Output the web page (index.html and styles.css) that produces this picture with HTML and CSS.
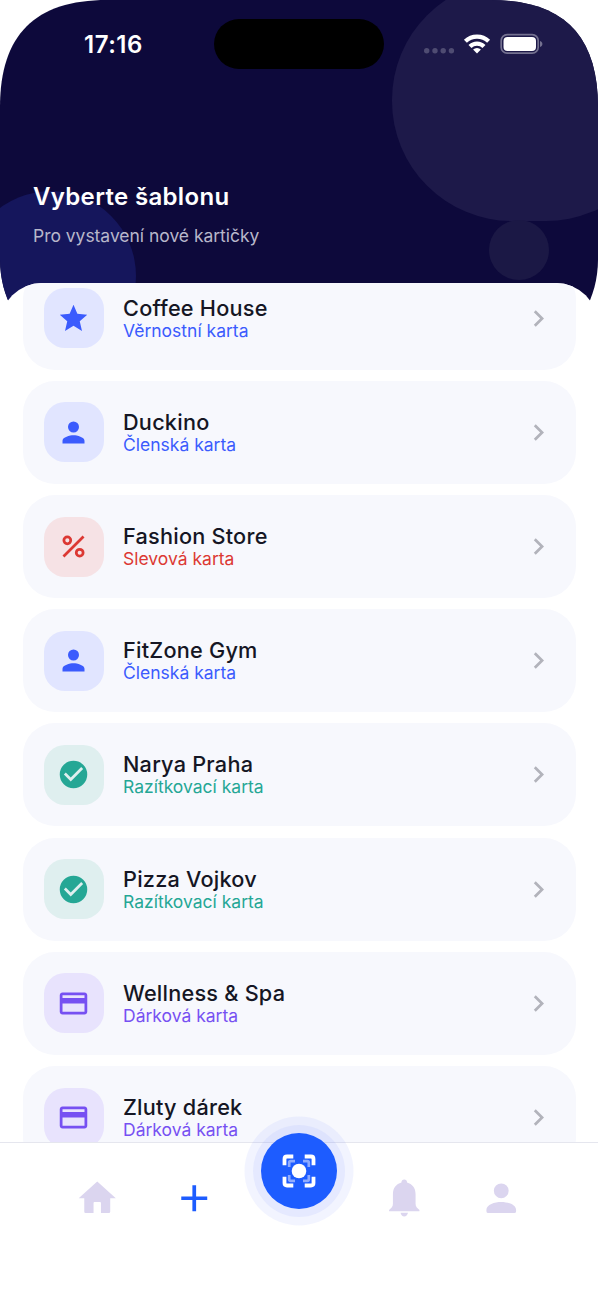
FILE: index.html
```html
<!DOCTYPE html>
<html lang="cs">
<head>
<meta charset="utf-8">
<meta name="viewport" content="width=device-width, initial-scale=1">
<title>Vyberte šablonu</title>
<link rel="stylesheet" href="styles.css">
</head>
<body>
<svg class="sprite" aria-hidden="true">
  <symbol id="star" viewBox="0 0 24 24"><path d="M12 17.27 18.18 21l-1.64-7.03L22 9.24l-7.19-.61L12 2 9.19 8.63 2 9.24l5.46 4.73L5.82 21z"/></symbol>
  <symbol id="person" viewBox="0 0 24 24"><path d="M12 12a4 4 0 1 0 0-8 4 4 0 0 0 0 8zm0 2c-2.67 0-8 1.34-8 4v2h16v-2c0-2.66-5.33-4-8-4z"/></symbol>
  <symbol id="percent" viewBox="0 0 24 24"><path d="M7.5 4a3.5 3.5 0 1 0 0 7 3.5 3.5 0 0 0 0-7zm0 5a1.5 1.5 0 1 1 0-3 1.5 1.5 0 0 1 0 3zm9 4a3.5 3.5 0 1 0 0 7 3.5 3.5 0 0 0 0-7zm0 5a1.5 1.5 0 1 1 0-3 1.5 1.5 0 0 1 0 3zM18.59 4 4 18.59 5.41 20 20 5.41z"/></symbol>
  <symbol id="check" viewBox="0 0 24 24"><path d="M12 2a10 10 0 1 0 0 20 10 10 0 0 0 0-20zm-2 15-5-5 1.41-1.41L10 14.17l7.59-7.59L19 8l-9 9z"/></symbol>
  <symbol id="credit" viewBox="0 0 24 24"><path d="M20 4H4c-1.11 0-1.99.89-1.99 2L2 18c0 1.11.89 2 2 2h16c1.11 0 2-.89 2-2V6c0-1.11-.89-2-2-2zm0 14H4v-6h16v6zm0-10H4V6h16v2z"/></symbol>
  <symbol id="chevron" viewBox="0 0 24 24"><path d="M10 6 8.59 7.41 13.17 12l-4.58 4.59L10 18l6-6z"/></symbol>
</svg>
<div class="screen">
  <header class="header">
    <span class="bubble bubble-large"></span>
    <span class="bubble bubble-small"></span>
    <span class="bubble bubble-blue"></span>
    <div class="status">
      <span class="time">17:16</span>
      <span class="island"></span>
      <svg class="indicators" viewBox="0 0 120 24" aria-hidden="true">
        <g fill="#4f4c72"><circle cx="3.7" cy="18.7" r="2.7"/><circle cx="12" cy="18.7" r="2.7"/><circle cx="20.2" cy="18.7" r="2.7"/><circle cx="28.4" cy="18.7" r="2.7"/></g>
        <g fill="none" stroke="#fff" stroke-width="4.2"><path d="M42.400 9.300a16.500 16.500 0 0 1 23.200 0"/><path d="M47 14.500a9.900 9.900 0 0 1 14 0"/></g>
        <path d="M54 21.500l-3.900-3.900a5.500 5.500 0 0 1 7.800 0z" fill="#fff"/>
        <rect x="78.200" y="2.700" width="37" height="18.500" rx="6" fill="none" stroke="#747190" stroke-width="1.700"/>
        <rect x="80.500" y="4.900" width="32.500" height="14.200" rx="4" fill="#fff"/>
        <path d="M117 9v6c3.200-1.100 3.200-4.900 0-6z" fill="#747190"/>
      </svg>
    </div>
    <h1 class="title">Vyberte šablonu</h1>
    <p class="subtitle">Pro vystavení nové kartičky</p>
  </header>

  <main class="sheet">
    <ul class="list">
      <li class="card blue"><span class="badge"><svg><use href="#star"/></svg></span><div class="label"><h2>Coffee House</h2><p>Věrnostní karta</p></div><svg class="chevron"><use href="#chevron"/></svg></li>
      <li class="card blue"><span class="badge"><svg><use href="#person"/></svg></span><div class="label"><h2>Duckino</h2><p>Členská karta</p></div><svg class="chevron"><use href="#chevron"/></svg></li>
      <li class="card red"><span class="badge"><svg><use href="#percent"/></svg></span><div class="label"><h2>Fashion Store</h2><p>Slevová karta</p></div><svg class="chevron"><use href="#chevron"/></svg></li>
      <li class="card blue"><span class="badge"><svg><use href="#person"/></svg></span><div class="label"><h2>FitZone Gym</h2><p>Členská karta</p></div><svg class="chevron"><use href="#chevron"/></svg></li>
      <li class="card green"><span class="badge"><svg><use href="#check"/></svg></span><div class="label"><h2>Narya Praha</h2><p>Razítkovací karta</p></div><svg class="chevron"><use href="#chevron"/></svg></li>
      <li class="card green"><span class="badge"><svg><use href="#check"/></svg></span><div class="label"><h2>Pizza Vojkov</h2><p>Razítkovací karta</p></div><svg class="chevron"><use href="#chevron"/></svg></li>
      <li class="card purple"><span class="badge"><svg><use href="#credit"/></svg></span><div class="label"><h2>Wellness &amp; Spa</h2><p>Dárková karta</p></div><svg class="chevron"><use href="#chevron"/></svg></li>
      <li class="card purple"><span class="badge"><svg><use href="#credit"/></svg></span><div class="label"><h2>Zluty dárek</h2><p>Dárková karta</p></div><svg class="chevron"><use href="#chevron"/></svg></li>
    </ul>
  </main>

  <nav class="tabs">
    <a class="tab"><svg viewBox="0 0 24 24"><path d="M10 20v-5.500q0-.5.500-.5h3q.5 0 .5.500V20h4.300q.7 0 .7-.7V12h3L12 3 2 12h3v7.300q0 .7.700.7z"/></svg></a>
    <a class="tab active"><svg viewBox="0 0 24 24"><path d="M19 13h-6v6h-2v-6H5v-2h6V5h2v6h6z"/></svg></a>
    <a class="tab scan">
      <svg viewBox="-19 -19 38 38" fill="none">
        <path stroke="#fff" stroke-width="3.800" d="M-14.500-5.700v-6.300q0-2.500 2.500-2.500h6.300M5.700-14.500H12q2.500 0 2.500 2.500v6.300M14.500 5.700V12q0 2.500-2.500 2.500H5.700M-5.700 14.500H-12q-2.500 0-2.500-2.500V5.700"/>
        <path stroke="#8eabff" stroke-width="2.700" d="M-9.800-4v-4.300q0-1.500 1.500-1.500H-4M4-9.800h4.300q1.500 0 1.500 1.500V-4M9.800 4v4.300q0 1.500-1.500 1.500H4M-4 9.800h-4.300q-1.500 0-1.500-1.500V4"/>
        <circle r="7.300" fill="#fff"/>
      </svg>
    </a>
    <a class="tab"><svg viewBox="0 0 44 44"><path d="M22 3.500c1.700 0 2.800 1.200 2.800 3 5 1.400 8.400 5.300 8.400 11.500v9.500c0 2.800 1.500 4.300 3.800 6v1.300H7v-1.300c2.300-1.700 3.800-3.200 3.800-6V18c0-6.200 3.400-10.100 8.400-11.500 0-1.800 1.100-3 2.800-3zM18.300 36.300h7.400c-.5 2.300-1.900 3.700-3.700 3.700s-3.200-1.400-3.700-3.700z"/></svg></a>
    <a class="tab"><svg viewBox="0 0 24 24"><path d="M12 12a4 4 0 1 0 0-8 4 4 0 0 0 0 8zm0 2c-3.500 0-8 1.400-8 4.300V19q0 1 1 1h14q1 0 1-1v-.700c0-2.900-4.500-4.300-8-4.300z"/></svg></a>
  </nav>
</div>
</body>
</html>
```

FILE: styles.css
```css
* { box-sizing: border-box; }

body {
  margin: 0;
  background: #fff;
  font-family: Inter, "Liberation Sans", sans-serif;
}

h1, h2, p, ul { margin: 0; padding: 0; }

.sprite { display: none; }

.screen {
  display: flex;
  flex-direction: column;
  width: 598px;
  height: 1300px;
  overflow: hidden;
}

.header {
  position: relative;
  flex: none;
  height: 370px;
  background: #0d093b;
  color: #fff;
  clip-path: path("M0 107C0 35 35 0 107 0H491C563 0 598 35 598 107V259C598 299 578 329 550 349H48C20 329 0 299 0 259Z");
}

.bubble { position: absolute; }

.bubble-large {
  left: 391.5px;
  top: -20px;
  width: 274px;
  height: 240.5px;
  border-radius: 120px;
  background: #1d1949;
}

.bubble-small {
  left: 489px;
  top: 220px;
  width: 60px;
  height: 60px;
  border-radius: 50%;
  background: #1b1845;
}

.bubble-blue {
  left: -34px;
  top: 191px;
  width: 170px;
  height: 170px;
  border-radius: 85px;
  background: #15165c;
}

.status {
  position: relative;
  display: grid;
  grid-template-columns: 130px 170px 120px;
  align-items: center;
  height: 88px;
  padding-left: 84px;
}

.time {
  padding-top: 1px;
  font-size: 24px;
  font-weight: 600;
  line-height: 28px;
  letter-spacing: .5px;
}

.island {
  height: 50px;
  border-radius: 25px;
  background: #000;
}

.indicators {
  width: 120px;
  height: 24px;
  margin-left: 39px;
}

.title {
  position: relative;
  margin: 94px 0 0 33px;
  font-size: 24px;
  line-height: 30px;
  font-weight: 600;
  letter-spacing: .33px;
}

.subtitle {
  position: relative;
  margin: 13px 0 0 33px;
  font-size: 17.500px;
  line-height: 22px;
  letter-spacing: -.03px;
  color: #b8b7ca;
}

.sheet {
  position: relative;
  flex: none;
  height: 859px;
  margin-top: -87px;
  overflow: hidden;
  border-radius: 42px 42px 0 0;
  background: #fff;
}

.list {
  display: flex;
  flex-direction: column;
  gap: 11.200px;
  margin-top: -16.300px;
  padding: 0 22px 0 22.500px;
  list-style: none;
}

.card {
  display: flex;
  flex: none;
  align-items: center;
  height: 103px;
  padding: 0 21px;
  border-radius: 32px;
  background: #f7f8fd;
}

.badge {
  display: flex;
  align-items: center;
  justify-content: center;
  width: 60px;
  height: 60px;
  border-radius: 21px;
}

.badge svg { width: 33px; height: 33px; fill: currentColor; }

.blue { color: #3b5bfd; }
.blue .badge { background: #e1e5ff; }
.red { color: #dc3833; }
.red .badge { background: #f6e2e5; }
.green { color: #25a795; }
.green .badge { background: #dfefef; }
.purple { color: #7650f2; }
.purple .badge { background: #e8e3fd; }

.label { flex: 1; margin-left: 19.500px; padding-top: 1px; }

.label h2 {
  color: #151624;
  font-size: 21.700px;
  line-height: 24px;
  font-weight: 500;
  letter-spacing: .22px;
}

.label p {
  font-size: 17.500px;
  line-height: 22px;
  letter-spacing: 0;
}

.chevron { width: 33px; height: 33px; fill: #b2b3bb; }

.tabs {
  position: relative;
  display: grid;
  grid-template-columns: 97px 97px 113px 97px 97px;
  flex: none;
  height: 158px;
  padding: 33px 0 0 48.500px;
  border-top: 1px solid #e5e6ee;
  background: #fff;
}

.tab {
  display: flex;
  justify-content: center;
  height: 44.500px;
}

.tab svg { width: 44.500px; height: 44.500px; fill: #dbd5ef; }
.active svg { fill: #1d5cff; }

.tab.scan {
  align-items: center;
  justify-self: center;
  width: 76px;
  height: 76px;
  margin-top: -43.500px;
  border-radius: 50%;
  background: #1d5cff;
  box-shadow: 0 0 0 8px rgba(65, 100, 255, .07), 0 0 0 16.500px rgba(65, 100, 255, .07);
}

.scan svg { width: 38px; height: 38px; fill: none; }
```
